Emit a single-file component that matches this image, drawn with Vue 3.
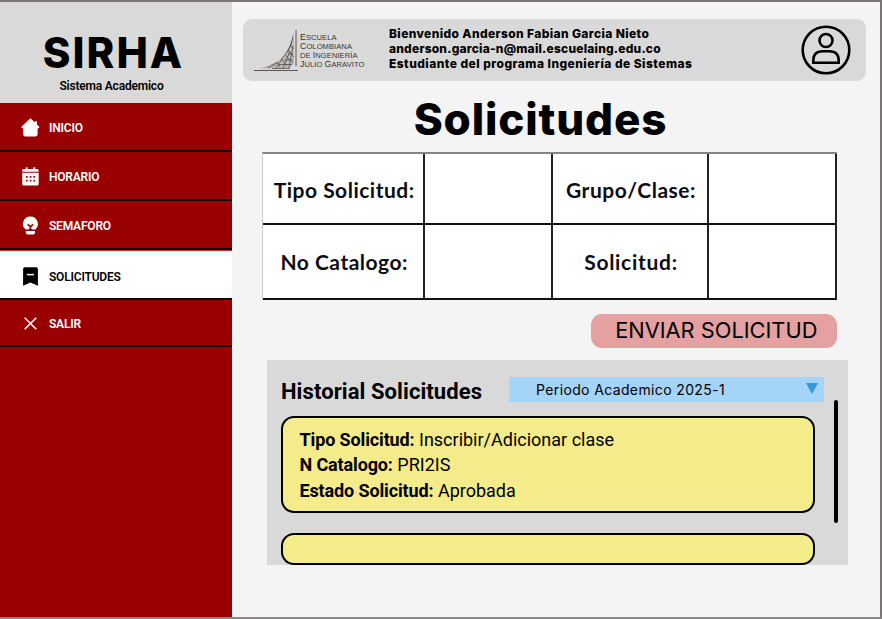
<script setup>
const menu = [
  { id: 'inicio', label: 'INICIO' },
  { id: 'horario', label: 'HORARIO' },
  { id: 'semaforo', label: 'SEMAFORO' },
  { id: 'solicitudes', label: 'SOLICITUDES' },
  { id: 'salir', label: 'SALIR' },
]
const active = 'solicitudes'
const details = [
  { name: 'Tipo Solicitud:', value: 'Inscribir/Adicionar clase' },
  { name: 'N Catalogo:', value: 'PRI2IS' },
  { name: 'Estado Solicitud:', value: 'Aprobada' },
]
</script>

<template>
  <div class="screen">
    <aside class="sidebar">
      <div class="brand">
        <div class="brand-name">SIRHA</div>
        <div class="brand-sub">Sistema Academico</div>
      </div>
      <nav class="menu">
        <a v-for="item in menu" :key="item.id" class="item" :class="[item.id, { active: item.id === active }]">
          <svg v-if="item.id === 'inicio'" class="icon" viewBox="0 0 20 20">
            <path d="M10.400.3 L15 4.600 V3.200 H17 V6.500 L19.300 8.800 Q19.600 10.200 18.400 10.200 H17.600 V16.600 Q17.600 18.400 15.800 18.400 H5 Q3.200 18.400 3.200 16.600 V10.200 H2.400 Q1.200 10.200 1.500 8.800Z" fill="#fff" />
          </svg>
          <svg v-else-if="item.id === 'horario'" class="icon" viewBox="0 0 20 20">
            <path d="M5.800.3h1.800v1.700h5.800V.3h1.800v1.700h1.900q1.600 0 1.600 1.500v1.300H2.200V3.500q0-1.500 1.600-1.500h2zM2.200 5.800h16.500v11.300q0 1.500-1.500 1.500H3.700q-1.500 0-1.500-1.500z" fill="#fff" />
            <path d="M6 9h1.700v1.700H6zm3.700 0h1.700v1.700H9.700zm3.700 0h1.700v1.700h-1.700zM6 12.800h1.700v1.700H6zm3.700 0h1.700v1.700H9.700zm3.700 0h1.700v1.700h-1.700z" fill="#900" />
          </svg>
          <svg v-else-if="item.id === 'semaforo'" class="icon" viewBox="0 0 20 20">
            <path d="M10.400.6a7.300 7.300 0 0 1 4.800 12.900H12.200L10.400 11.500L8.600 13.500H5.600A7.300 7.300 0 0 1 10.400.6zM5.800 14.900h9.200v1.700q0 2-2 2H7.800q-2 0-2-2z" fill="#fff" />
            <path d="M7.600 8.400l2.800 2.300L13.200 8.400M10.400 10.500v3" fill="none" stroke="#900" stroke-width="1.500" />
          </svg>
          <svg v-else-if="item.id === 'solicitudes'" class="icon" viewBox="0 0 20 20">
            <path d="M4.800.3h11.400q1.700 0 1.700 1.700v16.800L10.400 15.600l-7.300 3.200V2Q3.100.3 4.800.3z" fill="#000" />
            <path d="M6.900 7.600h7" stroke="#fff" stroke-width="1.500" />
          </svg>
          <svg v-else class="icon" viewBox="0 0 20 20">
            <path d="M4.700 3.700l11.600 11.600M16.300 3.700L4.700 15.300" stroke="#fff" stroke-width="1.600" />
          </svg>
          <span>{{ item.label }}</span>
        </a>
      </nav>
    </aside>

    <main class="main">
      <header class="topbar">
        <svg class="mark" viewBox="0 0 46 44">
          <path d="M1 40.300C22 38 35 28 39.500 4C39 17 33 28 19 35Q12 39 1 40.300z" fill="#332d2b" />
          <path d="M5 39.500C25 36 36 24 40 6V34L36 39.500z" fill="#8d8683" opacity=".35" />
          <path d="M14 39l9-5M22 39l8-12M29 39l7-17M35 39l4-22M23 33l3 5M27 30l6 7M31 26l8 8M34 21l6 7M36.500 16l3 4M18 39.500h18M25 35.500h13M30 31h9M34 25h5" fill="none" stroke="#4d4644" stroke-width=".75" />
          <path d="M42 1v36" stroke="#4d4644" stroke-width=".9" />
          <path d="M0 41.500h44" stroke="#4d4644" stroke-width=".9" />
        </svg>
        <div class="school">
          <div><b>E</b>SCUELA</div>
          <div><b>C</b>OLOMBIANA</div>
          <div>DE <b>I</b>NGENIERÍA</div>
          <div><b>J</b>ULIO <b>G</b>ARAVITO</div>
        </div>
        <div class="welcome">
          <div class="w1">Bienvenido Anderson Fabian Garcia Nieto</div>
          <div class="w2">anderson.garcia-n@mail.escuelaing.edu.co</div>
          <div class="w3">Estudiante del programa Ingeniería de Sistemas</div>
        </div>
        <svg class="avatar" viewBox="0 0 50 50" fill="none" stroke="#000" stroke-width="2.600">
          <circle cx="25" cy="25" r="23.300" />
          <circle cx="25" cy="15.500" r="6.500" />
          <path d="M12.300 37.700v-2.200q0-9.300 9.300-9.300h6.800q9.300 0 9.300 9.300v2.200z" />
        </svg>
      </header>

      <h1 class="title">Solicitudes</h1>

      <div class="grid">
        <div class="cell top"><span class="g1">Tipo Solicitud:</span></div>
        <div class="cell top"></div>
        <div class="cell top"><span class="g2">Grupo/Clase:</span></div>
        <div class="cell top"></div>
        <div class="cell"><span class="g3">No Catalogo:</span></div>
        <div class="cell"></div>
        <div class="cell"><span class="g4">Solicitud:</span></div>
        <div class="cell"></div>
      </div>

      <button class="send"><span>ENVIAR SOLICITUD</span></button>

      <section class="history">
        <div class="history-head">
          <h2>Historial Solicitudes</h2>
          <div class="period">
            <span>Periodo Academico 2025-1</span>
            <svg class="caret" viewBox="0 0 12 11"><path d="M0 0h12L6 11z" fill="#3797dc" /></svg>
          </div>
        </div>
        <div class="history-body">
          <div class="cards">
            <article class="card">
              <div v-for="d in details" :key="d.name" class="line"><b>{{ d.name }}</b> <span>{{ d.value }}</span></div>
            </article>
            <article class="card next"></article>
          </div>
          <div class="scroll"></div>
        </div>
      </section>
    </main>
  </div>
</template>

<style>
body { margin: 0; overflow: hidden; }
</style>

<style scoped>
* { box-sizing: border-box; }
.screen {
  width: 882px; height: 619px; display: flex; overflow: hidden;
  background: #f4f4f4; color: #000; font-family: Roboto, sans-serif;
  border-top: 2px solid #7a7474; border-right: 2px solid #7a7474; border-bottom: 2px solid #8a8787;
}
.sidebar { width: 232px; height: 617px; flex: none; background: #900; }
.brand { height: 101.400px; background: #d9d9d9; padding-top: 29.500px; text-align: center; }
.brand-name {
  font: 800 42px/41px Inter, sans-serif; letter-spacing: 2px; padding-right: 5px;
}
.brand-sub { font-weight: 600; font-size: 12px; line-height: 14px; letter-spacing: -0.2px; margin-top: 6.500px; padding-right: 9px; }
.menu { display: flex; flex-direction: column; }
.item {
  display: flex; align-items: center; gap: 9px; padding: 2px 0 0 20px; height: 49px;
  border-bottom: 2px solid #120000; color: #fff; font-weight: 600; font-size: 12px; line-height: 14px;
  letter-spacing: -0.2px;
}
.item.horario { height: 48.500px; }
.item.semaforo { height: 49px; padding-top: 3px; }
.item.active { background: #fff; color: #000; height: 50px; padding-top: 5px; border-top: 1px solid #c33; }
.item.salir { height: 47.500px; }
.icon { width: 20px; height: 20px; flex: none; }

.main { flex: 1; padding: 17px 14px 0 11px; }
.topbar {
  height: 62px; display: flex; align-items: flex-start; background: #d9d9d9;
  border-radius: 9px; padding: 0 15px 0 11px;
}
.mark { width: 46px; height: 44px; margin-top: 10px; flex: none; }
.school {
  width: 89px; flex: none; font: 7.600px/9.100px "Liberation Sans", sans-serif; color: #3c3533; padding-top: 14px;
  white-space: nowrap; letter-spacing: 0.05px;
}
.school b { font-weight: 400; font-size: 8.800px; }
.welcome { flex: 1; font: 800 12px/15.300px Inter, sans-serif; padding-top: 6.500px; white-space: nowrap; }
.w1 { letter-spacing: 0.38px; }
.w2 { letter-spacing: 0.21px; }
.w3 { letter-spacing: 0.46px; }
.avatar { width: 50px; height: 50px; flex: none; margin-top: 6px; }

.title {
  margin: 11px 0 0; height: 54px; font: 800 44px/54px Inter, sans-serif; letter-spacing: 0.85px;
  padding-right: 28px; text-align: center;
}
.grid {
  display: grid; grid-template-columns: 162.400px 127.600px 156px 128px; grid-template-rows: 71px 75px;
  width: 575px; margin: 6px 0 0 19px; border-top: 2px solid #858585; border-left: 1px solid #ccc; background: #fff;
}
.cell {
  display: flex; align-items: center; justify-content: center; border-right: 2px solid #222;
  border-bottom: 2px solid #111; padding-left: 2px; font: 700 21px/26px Lato, sans-serif; color: #0c0c14;
  white-space: nowrap;
}
.cell.top { padding-top: 2px; }
.g1, .g2, .g3 { letter-spacing: 0.5px; }
.g4 { letter-spacing: 0.7px; }
.send {
  display: flex; align-items: center; justify-content: center; width: 246.500px; height: 34px;
  margin: 13.500px 0 0 347.500px; padding: 0 0 1px 5px; border: 0; border-radius: 11px; background: #e5a1a1;
  color: #000; font: 400 21.800px/26px Inter, sans-serif; white-space: nowrap;
}
.history { width: 580.500px; height: 205px; margin: 12px 0 0 24px; background: #d9d9d9; padding: 17px 9.500px 0 14px; }
.history-head { display: flex; height: 26px; }
h2 { margin: 2px 0 0; width: 228px; font-size: 22px; line-height: 26px; font-weight: 700; letter-spacing: 0.08px; white-space: nowrap; }
.period {
  width: 315px; height: 25px; display: flex; align-items: center; justify-content: space-between;
  padding: 1px 6px 0 27px; background: #a4d4f8; font: 400 14px/18px Inter, sans-serif; letter-spacing: 0.37px;
}
.caret { width: 12px; height: 11px; margin-bottom: 3px; }
.history-body { display: flex; justify-content: space-between; }
.cards { width: 534px; padding-top: 13px; }
.card { height: 97px; border: 2px solid #000; border-radius: 13px; background: #f4eb8b; padding: 9.300px 16.500px; }
.card.next { height: 32px; margin-top: 20px; }
.line { font-size: 18px; line-height: 25.700px; height: 25.700px; white-space: nowrap; }
.line b { letter-spacing: -0.13px; }
.scroll { width: 4px; height: 123px; margin-top: -3px; border-radius: 2px; background: #000; }
</style>
